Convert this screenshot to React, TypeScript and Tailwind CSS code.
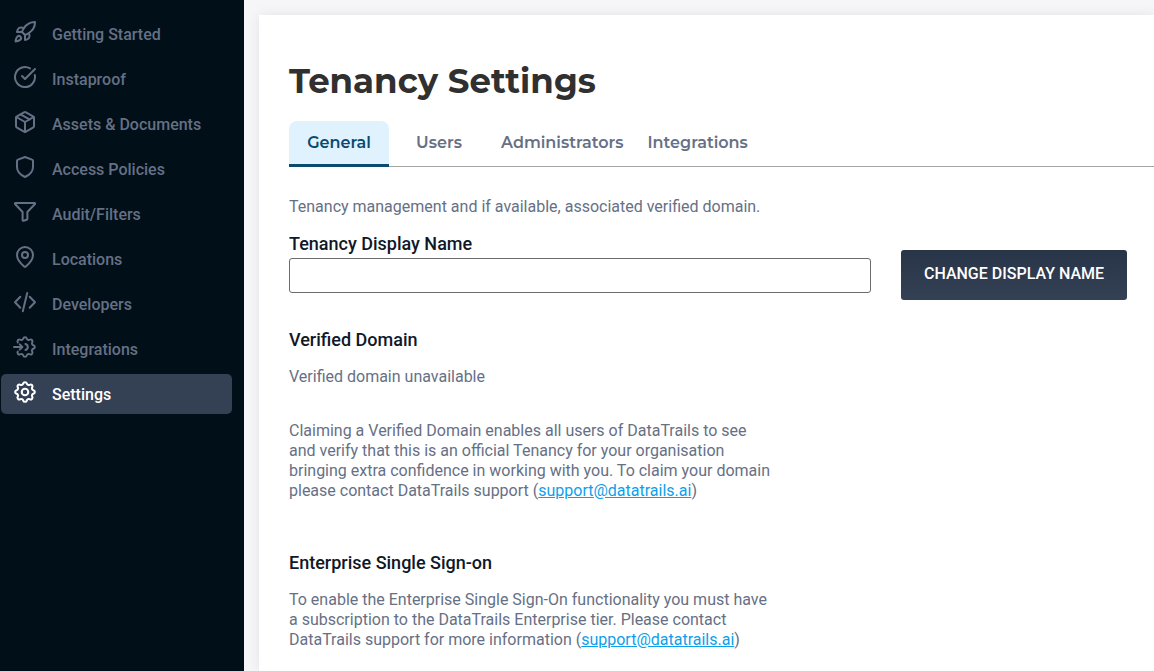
import React from "react";
import { CircleCheckBig, MapPin, Package, Rocket } from "lucide-react";

type IconProps = { className?: string };

const strokeProps = {
  width: 24,
  height: 24,
  fill: "none",
  stroke: "currentColor",
  strokeWidth: 2,
  strokeLinecap: "round",
  strokeLinejoin: "round",
  "aria-hidden": true,
} as const;

function RocketIcon({ className }: IconProps) {
  return <Rocket size={24} strokeWidth={2} className={className} />;
}

function CheckIcon({ className }: IconProps) {
  return <CircleCheckBig size={24} strokeWidth={2} className={className} />;
}

function BoxIcon({ className }: IconProps) {
  return <Package size={24} strokeWidth={2} className={className} />;
}

function PinIcon({ className }: IconProps) {
  return <MapPin size={24} strokeWidth={2} className={className} />;
}

function ShieldIcon({ className }: IconProps) {
  return (
    <svg {...strokeProps} viewBox="0 0 24 24" className={className}>
      <path d="M12 2l7 2.6c.6.2 1 .7 1 1.3V12c0 4.9-4.3 8.3-8 10C8.3 20.300 4 16.900 4 12V5.900c0-.6.4-1.100 1-1.300z" />
    </svg>
  );
}

function FunnelIcon({ className }: IconProps) {
  return (
    <svg {...strokeProps} viewBox="0 0 24 24" className={className}>
      <path d="M2.4 3h19.2c.5 0 .7.6.4 1l-7.6 8v6.8a1 1 0 0 1-.7.9l-3.2 1.100a.7.7 0 0 1-.9-.7V12L2 4c-.3-.4-.1-1 .4-1z" />
    </svg>
  );
}

function CodeIcon({ className }: IconProps) {
  return (
    <svg {...strokeProps} viewBox="0 0 24 24" className={className}>
      <path d="M7.3 6.700L2 12.200l5.300 5.500M16.700 6.700l5.300 5.500-5.300 5.500M14.200 2.900L9.800 21.300" />
    </svg>
  );
}

function IntegrationIcon({ className }: IconProps) {
  return (
    <svg {...strokeProps} strokeWidth={1.8} viewBox="1 1 22 22" className={className}>
      <path d="M5.383 7.753c-.94-1.543.826-3.31 2.37-2.37c1 .608 2.296.07 2.572-1.065c.426-1.756 2.924-1.756 3.35 0a1.724 1.724 0 0 0 2.573 1.066c1.543-.94 3.31.826 2.37 2.37a1.724 1.724 0 0 0 1.065 2.572c1.756.426 1.756 2.924 0 3.35a1.724 1.724 0 0 0-1.066 2.573c.94 1.543-.826 3.31-2.37 2.37a1.724 1.724 0 0 0-2.572 1.065c-.426 1.756-2.924 1.756-3.35 0a1.724 1.724 0 0 0-2.573-1.066c-1.543.94-3.31-.826-2.37-2.37" />
      <path d="M12.4 9.2a2.9 2.9 0 0 1 0 5.6" />
      <path d="M1.9 12h7.500M7.200 9.600L9.600 12l-2.400 2.400" />
    </svg>
  );
}

function GearIcon({ className }: IconProps) {
  return (
    <svg {...strokeProps} strokeWidth={1.9} viewBox="1 1 22 22" className={className}>
      <path d="M10.325 4.317c.426-1.756 2.924-1.756 3.35 0a1.724 1.724 0 0 0 2.573 1.066c1.543-.94 3.31.826 2.37 2.37a1.724 1.724 0 0 0 1.065 2.572c1.756.426 1.756 2.924 0 3.35a1.724 1.724 0 0 0-1.066 2.573c.94 1.543-.826 3.31-2.37 2.37a1.724 1.724 0 0 0-2.572 1.065c-.426 1.756-2.924 1.756-3.35 0a1.724 1.724 0 0 0-2.573-1.066c-1.543.94-3.31-.826-2.37-2.37a1.724 1.724 0 0 0-1.065-2.572c-1.756-.426-1.756-2.924 0-3.35a1.724 1.724 0 0 0 1.066-2.573c-.94-1.543.826-3.31 2.37-2.37c1 .608 2.296.07 2.572-1.065z" />
      <circle cx="12" cy="12" r="3" />
    </svg>
  );
}

const navItems = [
  { label: "Getting Started", Icon: RocketIcon },
  { label: "Instaproof", Icon: CheckIcon },
  { label: "Assets & Documents", Icon: BoxIcon },
  { label: "Access Policies", Icon: ShieldIcon },
  { label: "Audit/Filters", Icon: FunnelIcon },
  { label: "Locations", Icon: PinIcon },
  { label: "Developers", Icon: CodeIcon },
  { label: "Integrations", Icon: IntegrationIcon },
  { label: "Settings", Icon: GearIcon, active: true },
];

const tabs = [
  { label: "General", width: "w-[100px]", active: true },
  { label: "Users", width: "w-[100px]" },
  { label: "Administrators", width: "px-3" },
  { label: "Integrations", width: "px-3" },
];

function SupportLink() {
  return (
    <a href="mailto:support@datatrails.ai" className="text-[#0d9fea] underline">
      support@datatrails.ai
    </a>
  );
}

export default function App() {
  return (
    <div className="flex min-h-screen bg-[#f6f6f8] font-['Roboto',sans-serif] text-base leading-5 text-[#667085]">
      <nav aria-label="Main" className="w-[244px] shrink-0 bg-[#000f18] pt-3.5 pr-3 pl-px">
        <ul className="flex flex-col gap-[5px]">
          {navItems.map(({ label, Icon, active }) => (
            <li key={label}>
              <a
                href="#"
                aria-current={active ? "page" : undefined}
                className={`flex h-10 items-center gap-[15px] rounded-[5px] pt-0.5 pl-3 font-medium ${
                  active ? "bg-[#344054] text-white" : ""
                }`}
              >
                <Icon className="mb-1.5 shrink-0" />
                {label}
              </a>
            </li>
          ))}
        </ul>
      </nav>

      <div className="flex min-w-0 flex-1 pt-[15px] pl-[15px]">
        <main className="min-w-0 flex-1 bg-white pt-11 pb-5 pl-[30px] shadow-[0_0_12px_rgba(0,0,0,0.08)]">
          <h1 className="font-['Montserrat','Open_Sans',sans-serif] text-[34px] leading-11 font-bold text-[#303030]">
            Tenancy Settings
          </h1>

          <div role="tablist" className="mt-[18px] flex border-b border-[#a3a3a3]">
            {tabs.map(({ label, width, active }) => (
              <button
                key={label}
                type="button"
                role="tab"
                aria-selected={!!active}
                className={`-mb-px h-[46px] border-b-[3px] font-['Montserrat','Open_Sans',sans-serif] font-semibold ${width} ${
                  active ? "rounded-t-lg border-[#0b4a6f] bg-[#e0f2fe] text-[#0b4a6f]" : "border-transparent"
                }`}
              >
                {label}
              </button>
            ))}
          </div>

          <p className="mt-[30px]">Tenancy management and if available, associated verified domain.</p>

          <form className="mt-[15px] flex items-end pr-[27px]" onSubmit={(e) => e.preventDefault()}>
            <div className="mb-[7px] min-w-0 flex-1">
              <label htmlFor="display-name" className="block pb-0.5 text-lg leading-6 font-medium text-[#101828]">
                Tenancy Display Name
              </label>
              <input
                id="display-name"
                type="text"
                className="block h-[35px] w-full rounded-[3px] border border-[#6b6b6b] bg-white px-2 text-[#101828]"
              />
            </div>
            <button
              type="submit"
              className="ml-[30px] h-[50px] w-[226px] shrink-0 rounded-[3px] bg-linear-to-b from-[#283548] to-[#344054] pb-0.5 font-medium text-white"
            >
              CHANGE DISPLAY NAME
            </button>
          </form>

          <section className="mt-7 max-w-[485px]">
            <h2 className="text-lg leading-6 font-medium text-[#101828]">Verified Domain</h2>
            <p className="mt-[15px]">Verified domain unavailable</p>
            <p className="mt-[34px]">
              Claiming a Verified Domain enables all users of DataTrails to see and verify that this is an official
              Tenancy for your organisation bringing extra confidence in working with you. To claim your domain please
              contact DataTrails support (<SupportLink />)
            </p>
          </section>

          <section className="mt-[50px] max-w-[485px]">
            <h2 className="text-lg leading-6 font-medium text-[#101828]">Enterprise Single Sign-on</h2>
            <p className="mt-[15px]">
              To enable the Enterprise Single Sign-On functionality you must have a subscription to the DataTrails
              Enterprise tier. Please contact DataTrails support for more information (<SupportLink />)
            </p>
          </section>
        </main>
      </div>
    </div>
  );
}
